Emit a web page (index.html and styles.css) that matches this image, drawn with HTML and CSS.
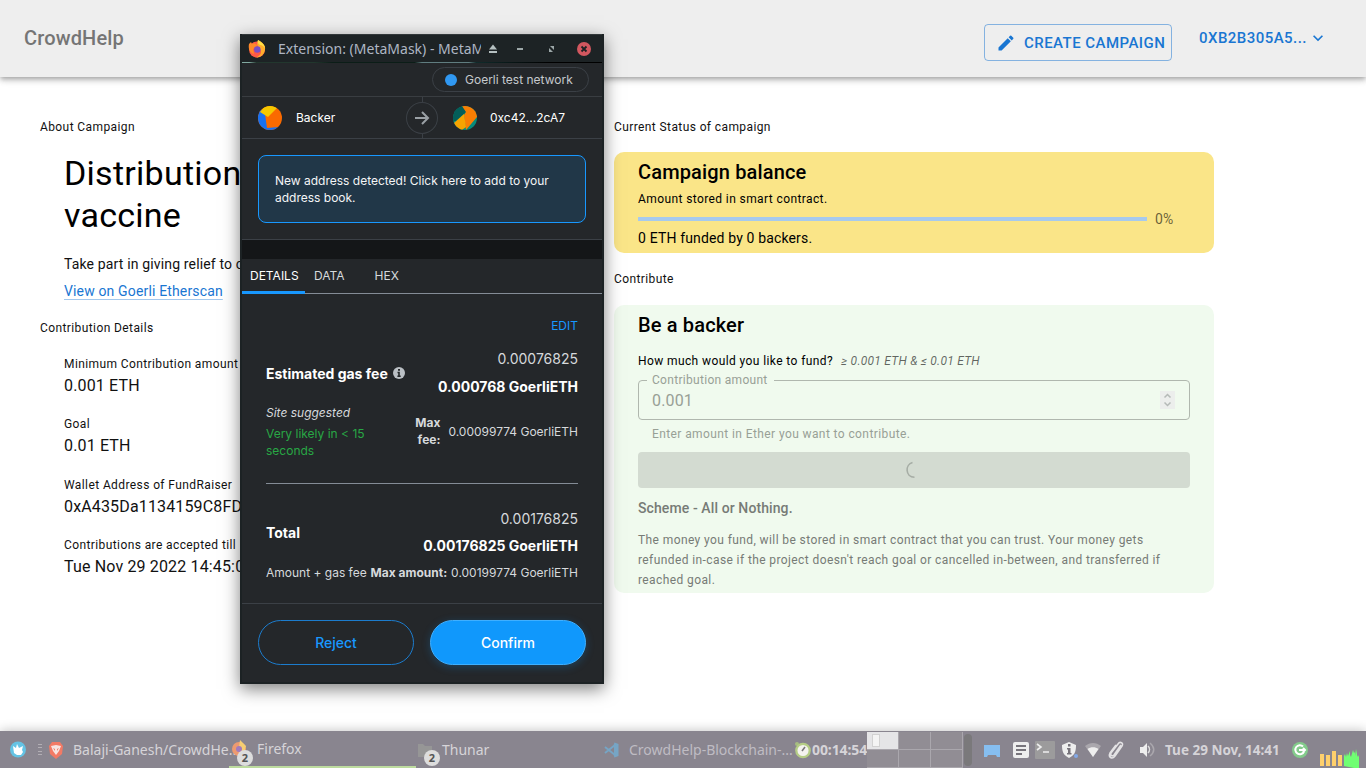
FILE: index.html
```html
<!DOCTYPE html>
<html lang="en">
<head>
<meta charset="utf-8">
<title>CrowdHelp</title>
<link rel="stylesheet" href="styles.css">
</head>
<body>
<header class="appbar">
  <div class="brand">CrowdHelp</div>
  <div class="create"><svg width="20" height="20" viewBox="0 0 24 24"><path fill="currentColor" d="M3 17.25V21h3.75L17.81 9.94l-3.75-3.75L3 17.25zM20.71 7.04a1 1 0 0 0 0-1.41l-2.34-2.34a1 1 0 0 0-1.41 0l-1.83 1.83 3.75 3.75 1.83-1.83z"/></svg><span>CREATE CAMPAIGN</span></div>
  <div class="account"><span>0XB2B305A5...</span><svg width="20" height="20" viewBox="0 0 24 24"><path fill="currentColor" d="M7.41 8.59 12 13.17l4.59-4.58L18 10l-6 6-6-6z"/></svg></div>
</header>
<main class="page">
  <section class="about">
    <div class="caption">About Campaign</div>
    <div class="indent intro">
      <h1>Distribution of<br>vaccine</h1>
      <p>Take part in giving relief to covid</p>
      <a class="link">View on Goerli Etherscan</a>
    </div>
    <div class="caption">Contribution Details</div>
    <dl class="indent facts">
      <div><dt>Minimum Contribution amount</dt><dd>0.001 ETH</dd></div>
      <div><dt>Goal</dt><dd>0.01 ETH</dd></div>
      <div><dt>Wallet Address of FundRaiser</dt><dd>0xA435Da1134159C8FD</dd></div>
      <div><dt>Contributions are accepted till</dt><dd>Tue Nov 29 2022 14:45:00</dd></div>
    </dl>
  </section>
  <section class="status">
    <div class="caption">Current Status of campaign</div>
    <div class="card balance">
      <h2>Campaign balance</h2>
      <div class="caption">Amount stored in smart contract.</div>
      <div class="progress"><i></i><span>0%</span></div>
      <p>0 ETH funded by 0 backers.</p>
    </div>
    <div class="caption">Contribute</div>
    <div class="card backer">
      <h2>Be a backer</h2>
      <div class="question">How much would you like to fund?<em>≥ 0.001 ETH &amp; ≤ 0.01 ETH</em></div>
      <fieldset class="field"><legend>Contribution amount</legend><span>0.001</span><b class="spin"><svg width="15" height="18" viewBox="0 0 15 18" fill="none" stroke="#b5bab7" stroke-width="1.5"><path d="m4.500 6.500 3-3 3 3m0 5-3 3-3-3"/></svg></b></fieldset>
      <div class="helper">Enter amount in Ether you want to contribute.</div>
      <div class="submit"><svg width="18" height="18" viewBox="0 0 18 18" fill="none" stroke="#a6ada5" stroke-width="1.600"><path d="M7.500 1.500C0 3.500 0 16 9.500 16.200"/></svg></div>
      <h3>Scheme - All or Nothing.</h3>
      <div class="scheme">The money you fund, will be stored in smart contract that you can trust. Your money gets refunded in-case if the project doesn't reach goal or cancelled in-between, and transferred if reached goal.</div>
    </div>
  </section>
</main>

<div class="window">
  <div class="titlebar">
    <svg class="fox" width="18" height="18" viewBox="0 0 18 18"><circle cx="9" cy="9.500" r="8" fill="#ff5a45"/><path fill="#ffae2b" d="M10 0c4 2 8 5 7 10-1 5-5 7.500-9 7.500 5-2 6-5 4-9-2-2-4-4-2-8.500z"/><path fill="#ffdf45" d="M10 0c3 2 7 4 7 9-1-3-3-4-5-4-2-1-2.500-3-2-5z"/><path fill="#ff8a2a" d="m1 4 2-2 1 2c3-1 5 0 5 2L5 9l1 5c-4-1-6-5-5-10z"/><circle cx="9.300" cy="9.500" r="3.300" fill="#7a50c4"/></svg>
    <span class="title">Extension: (MetaMask) - MetaMask</span>
    <svg class="ctl" width="110" height="18" viewBox="0 0 110 18"><path fill="#b5c0c1" d="m9 4.500 4 5H5zM5 11h8v2H5z"/><path fill="#9da8a9" d="M33 8h6v2h-6zM66 6h4v4zM65 8v4h4z"/><circle cx="100" cy="9" r="7" fill="#d2575f"/><path d="m97.500 6.500 5 5m0-5-5 5" stroke="#1d2224" stroke-width="1.800"/></svg>
  </div>
  <div class="strip"></div>
  <div class="network"><div class="netpill"><i></i><span class="t-net">Goerli test network</span></div></div>
  <div class="parties">
    <svg width="24" height="24" viewBox="0 0 24 24"><clipPath id="a"><circle cx="12" cy="12" r="12"/></clipPath><g clip-path="url(#a)"><path fill="#fa6a00" d="M0 0h24v24H0z"/><path fill="#1871f2" d="M0 0v24h24l-3-3-12 1-2-14z"/><path fill="#f5c800" d="M2 6 7 0h11l1 2-9 9z"/></g></svg>
    <span class="t-backer">Backer</span>
    <div class="arrow"><svg width="32" height="32" viewBox="0 0 32 32" fill="none" stroke="#9aa0a5" stroke-width="2"><path d="M9 16h13m-6-6 6 6-6 6"/></svg></div>
    <svg width="24" height="24" viewBox="0 0 24 24"><clipPath id="b"><circle cx="12" cy="12" r="12"/></clipPath><g clip-path="url(#b)"><path fill="#078b7b" d="M0 0h24v24H0z"/><path fill="#035e59" d="M0 0h10l3 6L3 15H0z"/><path fill="#f97e03" d="M9 0h15v11L13 24 11 9l2-3z"/><path fill="#f7a401" d="m1 17 10-9 2 13-4 3H4z"/></g></svg>
    <span class="t-addr">0xc42...2cA7</span>
  </div>
  <div class="notice"><div><span class="t-n1">New address detected! Click here to add to your</span><br><span class="t-n2">address book.</span></div></div>
  <div class="band"></div>
  <div class="tabs"><span class="on">DETAILS</span><span class="t-data">DATA</span><span class="t-hex">HEX</span></div>
  <div class="details">
    <div class="edit">EDIT</div>
    <div class="fee">
      <div class="label"><b class="t-gas">Estimated gas fee</b><svg width="12" height="12" viewBox="0 0 12 12"><circle cx="6" cy="6" r="6" fill="#bbc0c5"/><path fill="#24272a" d="M5 2h2v1.700H5zM4.500 4.800h2.300v3.700h.9V10H4.400V8.500h.8V6.200h-.7z"/></svg></div>
      <div class="nums"><span class="t-v1">0.00076825</span><b class="t-v2">0.000768 GoerliETH</b></div>
    </div>
    <div class="sub">
      <div class="left"><em>Site suggested</em><span class="green"><span class="t-vl">Very likely in &lt; 15</span><br><span class="t-sec">seconds</span></span></div>
      <b class="maxfee">Max<br>fee:</b><span class="t-mf">0.00099774 GoerliETH</span>
    </div>
    <div class="fee total">
      <div class="label"><b class="t-tot">Total</b></div>
      <div class="nums"><span class="t-v3">0.00176825</span><b class="t-v4">0.00176825 GoerliETH</b></div>
    </div>
    <div class="amount"><span class="t-ag">Amount + gas fee</span><b class="t-ma">Max amount:</b><span class="t-mf">0.00199774 GoerliETH</span></div>
  </div>
  <div class="actions"><div class="reject"><span>Reject</span></div><div class="confirm"><span>Confirm</span></div></div>
</div>

<footer class="taskbar">
  <svg class="tb-start" width="38" height="37" viewBox="0 0 38 37"><circle cx="8" cy="18.500" r="8" fill="#64c3e4"/><path fill="#fff" d="m3 15 3 2 1-4 2 4 4-2-1 4 1 2-2 3H7l-3-2z"/><path stroke="#b2aeb4" d="M28 13.500h4m-4 3h4m-4 4h4m-4 3h4"/></svg>
  <div class="task t1"><svg width="16" height="18" viewBox="0 0 16 18"><path fill="#f27a65" d="m4 1 8 0 3 4-1 8-6 5-6-5-1-8z"/><path fill="#f7e5e2" d="m3 5 5-1 5 1-2 5-3 4-3-4z"/><path fill="#f27a65" d="m5 7 2 1v2zm6 0-2 1v2z"/></svg><span>Balaji-Ganesh/CrowdHe...</span></div>
  <div class="task t2"><svg width="18" height="18" viewBox="0 0 18 18"><circle cx="9" cy="9" r="7" fill="#ed9a70"/><path fill="#f6ce72" d="m10 0 6 6-2 8-5-7z"/><circle cx="9" cy="9" r="3" fill="#a17bbc"/></svg><i class="count">2</i><span>Firefox</span></div>
  <div class="task t3"><svg width="18" height="18" viewBox="0 0 18 18"><path fill="#969696" d="M2 3h5l2 2h7v11H2z"/></svg><i class="count">2</i><span>Thunar</span></div>
  <div class="task t4"><svg width="16" height="16" viewBox="0 0 16 16" fill="none" stroke="#76a5c5" stroke-width="2"><path d="m1 5 10 8V3L1 11"/><path stroke-width="3" d="m10 2 3 1v10l-3 1"/></svg><span>CrowdHelp-Blockchain-...</span></div>
  <div class="timer"><svg width="18" height="18" viewBox="0 0 18 18"><circle cx="3" cy="3" r="2" fill="#a6bd80"/><circle cx="9" cy="9.500" r="6.700" fill="#f4f3ef" stroke="#b5cd86" stroke-width="2.300"/><path stroke="#777" stroke-width="1.500" d="m8 10 3-4"/></svg><b>00:14:54</b></div>
  <div class="pager"><i class="cur"><u></u></i><i></i><i></i><i></i><i></i><i></i></div>
  <svg class="tray" width="196" height="37" viewBox="0 0 196 37">
    <rect width="8" height="32" y="3" rx="4" fill="#7a797b"/>
    <path fill="#86bef0" d="M20 14h16v12h-3l-1-2h-8l-1 2h-3z"/>
    <rect x="49" y="11" width="16" height="16" rx="2" fill="#eee"/><path stroke="#77747b" stroke-width="1.800" d="M52 15h10m-10 4h10m-10 4h6"/>
    <rect x="71" y="10" width="20" height="18" rx="1" fill="#9c9b9c"/><path stroke="#eee" stroke-width="1.600" fill="none" d="m73 13 4 3-4 3m6 2h6"/>
    <path fill="#eee" d="m105 11 7 3c0 6-1 10-7 13-6-3-7-7-7-13z"/><path fill="#77737b" d="M104 13h2.500v2.500H104zm-1 4h3.500v5h1v1.500H103V22h1v-3.500h-1z"/><circle cx="112" cy="25" r="2" fill="#82a9e8"/>
    <path fill="#aaa7ad" d="M121 15c5-4 11-4 16 0l-8 11z"/><path fill="#eee" d="M123.500 18c3-2.500 8-2.500 11 0L129 26z"/>
    <path stroke="#e3e2e4" stroke-width="1.600" fill="none" d="m157 14-7 10c-2 2-4 0-3-2l7-9c2-3 6-1 4 2l-7 10c-3 4-7 1-5-3l6-8"/>
    <path fill="#eee" d="M176 16h3l4-4v14l-4-4h-3z"/><path fill="none" stroke="#ddd" stroke-width="1.500" d="M184 15c2 2 2 5 0 7"/><path fill="none" stroke="#aaa7ad" stroke-width="1.500" d="M186 12c5 4 5 9 0 13"/>
  </svg>
  <b class="clock">Tue 29 Nov, 14:41</b>
  <svg class="load" width="74" height="37" viewBox="0 0 74 37"><circle cx="10" cy="19" r="8" fill="#83cb8b"/><path fill="none" stroke="#fff" stroke-width="2" d="M13 15.500a4.500 4.500 0 1 0 1 5M9 19h6m-2-2 2 2-2 2"/><path fill="#ffd06c" d="M30 23h4v12h-4zm6 1h4v11h-4zm6-4h4v15h-4zm6 4h4v11h-4z"/><path fill="#70ff73" d="M54 35V25l1-2 1 3 1-4 1 3 2-5v4l1 2 2-7 1 3 1-1v4l1-7 1 5v3l1-2 1 2v12z"/></svg>
</footer>
</body>
</html>
```
FILE: styles.css
```css
* { box-sizing: border-box; margin: 0; }
body { width: 1366px; height: 768px; overflow: hidden; display: flex; flex-direction: column; background: #fff; color: #111; font-family: Roboto, sans-serif; }
svg { flex: none; display: block; }
.appbar { height: 77px; flex: none; background: #eee; display: flex; align-items: flex-start; padding: 0 38px 0 24px; position: relative; box-shadow: 0 2px 4px -1px rgba(0,0,0,.2), 0 4px 5px rgba(0,0,0,.14), 0 1px 10px rgba(0,0,0,.12); }
.brand { font-size: 20px; font-weight: 500; letter-spacing: .15px; line-height: 32px; color: #757575; padding-top: 22px; flex: 1; }
.create { display: flex; align-items: center; gap: 8px; width: 188px; height: 37px; margin-top: 24px; padding-left: 11px; border: 1px solid rgba(25,118,210,.5); border-radius: 4px; color: #1976d2; font-size: 15px; font-weight: 500; letter-spacing: .46px; white-space: nowrap; }
.account { display: flex; align-items: center; justify-content: space-between; width: 129px; height: 24px; margin: 26px 0 0 27px; color: #1976d2; font-size: 15px; font-weight: 500; letter-spacing: .46px; }
.page { flex: 1; display: grid; grid-template-columns: 574px 600px; padding: 40px 0 0 40px; align-items: start; }
.caption, dt { font-size: 12px; line-height: 20px; letter-spacing: .4px; }
.indent { padding-left: 24px; }
.intro { padding-top: 15px; padding-bottom: 17px; }
h1 { font-size: 34px; font-weight: 400; line-height: 42px; letter-spacing: .25px; color: #000; }
.about p { font-size: 14px; line-height: 20px; letter-spacing: .15px; margin-top: 18px; }
.link { display: inline-block; font-size: 14px; line-height: 20px; letter-spacing: .15px; margin-top: 7px; color: #1976d2; text-decoration: underline; text-decoration-color: rgba(25,118,210,.4); text-underline-offset: 3px; vertical-align: top; }
.facts { padding-top: 16px; display: grid; gap: 16.400px; }
dd { font-size: 16px; line-height: 24px; letter-spacing: .15px; margin: 0; }
.card { border-radius: 10px; padding: 0 24px; margin-top: 15px; color: #000; }
.balance { background: #fae588; height: 101px; margin-bottom: 16px; padding-top: 4px; }
.backer { background: #f0faee; height: 288px; margin-top: 16px; padding-top: 4px; }
h2 { font-size: 20px; font-weight: 500; line-height: 32px; letter-spacing: .15px; }
.balance .caption { margin-top: 1px; }
.progress { display: flex; align-items: center; height: 19px; gap: 8px; font-size: 14px; letter-spacing: .15px; color: rgba(0,0,0,.6); }
.progress i { width: 509px; height: 4px; background: #a7caed; }
.balance p { font-size: 14px; line-height: 20px; letter-spacing: .15px; }
.question { font-size: 12px; line-height: 20px; letter-spacing: .4px; margin-top: 10px; white-space: nowrap; }
.question em { color: rgba(0,0,0,.6); margin-left: 8px; letter-spacing: .25px; }
.field { position: relative; display: flex; align-items: center; justify-content: space-between; margin-top: 9px; height: 40px; border: 1px solid #b0b7ae; border-radius: 4px; padding: 0 14px 0 13px; color: #98a096; font-size: 16px; letter-spacing: .15px; }
.field legend { position: absolute; left: 8px; top: -9px; padding: 0 6px 0 5px; background: #f0faee; font-size: 12px; line-height: 16px; letter-spacing: .3px; white-space: nowrap; }
.spin { background: #eceeec; height: 18px; }
.helper { font-size: 12px; line-height: 20px; letter-spacing: .4px; color: #98a096; padding: 4px 14px 0; }
.submit { margin-top: 8px; height: 36px; border-radius: 4px; background: #d3dbd1; display: flex; align-items: center; justify-content: center; }
h3 { font-size: 14px; font-weight: 500; line-height: 22px; letter-spacing: .1px; margin-top: 9px; color: #777b76; }
.scheme { font-size: 12px; line-height: 20px; letter-spacing: .4px; color: #777b76; margin-top: 11px; }

.window { position: absolute; left: 240px; top: 34px; width: 364px; height: 650px; border: 2px solid #1c2224; border-top: 0; background: #24272a; color: #d6d9dc; font: 12px/17px Inter, sans-serif; box-shadow: 0 5px 16px rgba(0,0,0,.5); white-space: nowrap; display: flex; flex-direction: column; }
.titlebar { height: 28px; flex: none; display: flex; align-items: center; background: #1d2325; border-top: 1px solid #32383a; color: #aeb6c3; }
.fox { margin-left: 6px; }
.title { font: 14px/20px "Noto Sans", sans-serif; margin-left: 12px; width: 203px; overflow: hidden; }
.ctl { margin-left: 3px; }
.strip { height: 1px; background: linear-gradient(90deg, #81a9a0 0 2%, #22372e 4% 20%, #0b1d17 25% 48%, #607d80 50% 63%, #102c2c 65%, #000 85%); }
.network { height: 34px; display: flex; justify-content: flex-end; padding: 4px 13px 0 0; border-bottom: 1px solid #393d41; }
.netpill { width: 157px; height: 25px; border: 1px solid #3b4046; border-radius: 13px; display: flex; align-items: center; padding-left: 12px; gap: 8px; color: #c5c9cd; }
.netpill i { width: 12px; height: 12px; border-radius: 50%; background: #3098f2; }
.parties { height: 42px; border-bottom: 1px solid #3b4046; display: flex; align-items: center; padding-left: 16px; color: #fff; background: linear-gradient(#3b4046, #3b4046) 180px 0 / 1px 41px no-repeat; font-size: 12px; }
.t-backer { width: 110px; margin-left: 14px; }
.arrow { width: 32px; height: 32px; border-radius: 50%; box-shadow: inset 0 0 0 1px #3b4046; margin-right: 15px; background: #24272a; }
.arrow svg { stroke: #9aa0a5; }
.t-addr { margin-left: 13px; }
.notice { height: 101px; padding: 16px; border-bottom: 1px solid #3b4046; color: #f4f5f6; }
.notice div { height: 68px; border: 1px solid #1898ff; border-radius: 8px; background: #213748; padding: 16px; }
.band { height: 19px; background: #141618; }
.tabs { height: 35px; border-bottom: 1px solid #848c96; display: flex; padding-top: 8px; }
.tabs span { height: 27px; padding: 0 8px; margin-right: 2px; }
.tabs .on { color: #fff; border-bottom: 3px solid #1898ff; width: 63px; margin-right: 1px; }
.tabs .t-hex { margin-left: 12px; }
.details { padding: 23px 24px 0; height: 310px; border-bottom: 1px solid #3b4046; }
.edit { color: #1898ff; text-align: right; }
.fee { display: flex; justify-content: space-between; font-size: 14px; align-items: center; margin-top: 11px; height: 56px; }
.label { display: flex; gap: 5px; align-items: center; color: #fff; }
.nums { display: grid; justify-items: end; row-gap: 8px; line-height: 20px; }
.nums b { color: #fff; }
.sub { display: flex; height: 83px; padding-top: 3px; border-bottom: 1px solid #848c96; }
.left { width: 143px; display: grid; align-content: start; gap: 4px; }
.green { color: #28a745; }
.maxfee { width: 36px; text-align: right; margin-right: 8px; padding-top: 10px; }
.sub .t-mf { padding-top: 19px; }
.total { margin-top: 20px; height: 57px; }
.total .nums { row-gap: 7px; }
.amount { display: flex; justify-content: space-between; align-items: center; margin-top: 3px; }
.amount .t-mf { margin-left: 0; }
.actions { display: flex; gap: 16px; padding: 16px; font-size: 14px; font-weight: 500; }
.actions div { width: 156px; height: 45px; border: 1px solid #1c7ccd; border-radius: 23px; display: flex; align-items: center; justify-content: center; color: #1898ff; }
.actions .confirm { background: #1098fc; border-color: #3fafff; color: #fff; box-shadow: 0 2px 8px rgba(16,152,252,.25); }

.taskbar { position: relative; height: 37px; flex: none; background: #89858f; display: flex; align-items: center; font: 14px/20px "Noto Sans", sans-serif; color: #d6d4d8; padding-left: 10px; box-shadow: 0 -1px 10px rgba(0,0,0,.22); white-space: nowrap; }
.task { height: 37px; flex: none; display: flex; align-items: center; position: relative; }
.t1 { width: 181px; gap: 9px; }
.t2 { width: 187px; gap: 9px; border-bottom: 2px solid #bddb9f; padding-left: 1px; }
.t3 { width: 188px; gap: 8px; }
.t4 { width: 192px; gap: 9px; color: #bfbcc3; }
.count { position: absolute; left: 8px; top: 19px; width: 16px; height: 16px; border-radius: 50%; background: #ddd; color: #555; font: 700 11px/16px "Noto Sans", sans-serif; text-align: center; }
.timer { width: 73px; flex: none; display: flex; align-items: center; margin-left: -2px; }
.timer b { letter-spacing: -.1px; }
.pager { width: 96px; height: 36px; flex: none; display: grid; grid-template-columns: repeat(3, 32px); grid-template-rows: 18px 18px; }
.pager i { background: #918d94; border-right: 1px solid #aaa7ad; border-bottom: 1px solid #aaa7ad; }
.pager .cur { background: #e5e5e7; padding: 2px 5px; }
.pager u { display: block; width: 8px; height: 13px; background: #f4f4f4; border: 1px solid #d2d2d2; }
.tray { margin-left: 1px; }
.clock { width: 114px; margin-left: 5px; font-size: 13.500px; }
.load { margin-left: 11px; }
```
